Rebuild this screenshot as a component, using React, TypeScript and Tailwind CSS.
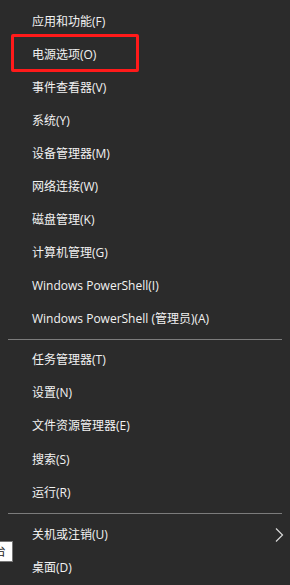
const groupOne = [
  "应用和功能(F)",
  "电源选项(O)",
  "事件查看器(V)",
  "系统(Y)",
  "设备管理器(M)",
  "网络连接(W)",
  "磁盘管理(K)",
  "计算机管理(G)",
  "Windows PowerShell(I)",
  "Windows PowerShell (管理员)(A)",
];

const groupTwo = ["任务管理器(T)", "设置(N)", "文件资源管理器(E)", "搜索(S)", "运行(R)"];

const font = {
  fontFamily: '"Open Sans", "Noto Sans CJK SC", sans-serif',
};

const Item = ({ label, tall, marked }: { label: string; tall?: boolean; marked?: boolean }) => (
  <div
    className={`relative flex items-center pl-[32px] text-[12px] text-[#f2f2f2] ${
      tall ? "h-[33.4px]" : "h-[33px]"
    }`}
  >
    <span>{label}</span>
    {marked && (
      <div className="absolute left-[11px] top-[-4px] w-[128px] h-[38px] border-[3px] border-[#ff1a1a] rounded-[2px]" />
    )}
  </div>
);

const Separator = ({ className }: { className: string }) => (
  <div className={`mx-[8px] h-px bg-[#7c7c7c] ${className}`} />
);

export default function App() {
  return (
    <div className="relative w-[290px] h-[585px] bg-[#2b2b2b] overflow-hidden" style={font}>
      <div className="pt-[5px]">
        {groupOne.map((label, i) => (
          <Item key={label} label={label} marked={i === 1} />
        ))}
      </div>
      <Separator className="mt-[4px] mb-[3px]" />
      <div>
        {groupTwo.map((label) => (
          <Item key={label} label={label} tall />
        ))}
      </div>
      <Separator className="mt-[3px] mb-[4px]" />
      <div className="relative">
        <Item label="关机或注销(U)" tall />
        <svg
          className="absolute left-[275px] top-[10px]"
          width="9"
          height="14"
          viewBox="0 0 9 14"
          fill="none"
        >
          <polyline points="1,0.5 7.5,7 1,13.5" stroke="#d8d8d8" strokeWidth="1.2" />
        </svg>
        <Item label="桌面(D)" tall />
      </div>

      {/* tooltip cut off at the left edge */}
      <div className="absolute left-[-22px] top-[541px] w-[35px] h-[21px] bg-white border border-[#777] flex items-center justify-end pr-[6px] text-[12px] text-[#222]">
        台
      </div>
    </div>
  );
}
